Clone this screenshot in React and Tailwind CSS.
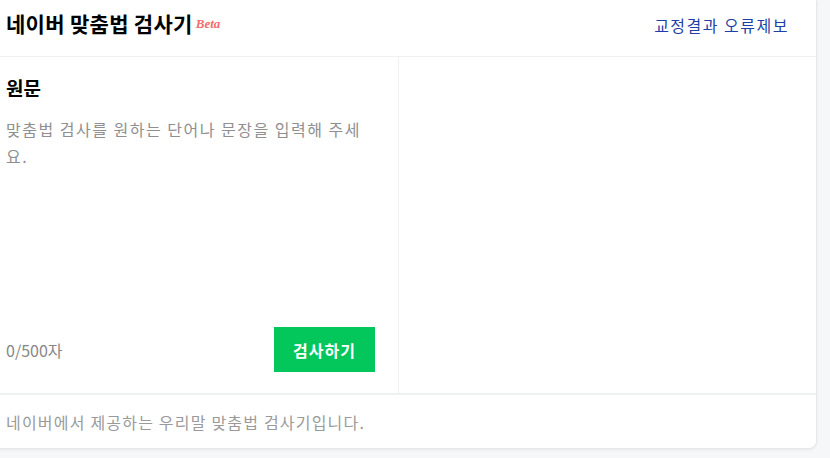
export default function App() {
  const font = { fontFamily: '"Noto Sans CJK KR", "Noto Sans", sans-serif' };
  return (
    <div className="min-h-[458px] w-[830px] overflow-hidden bg-[#f6f7f9]" style={font}>
      <div className="ml-[-19px] w-[836px] rounded-b-lg border border-t-0 border-[#e6e8eb] bg-white shadow-[0_1px_3px_rgba(0,0,0,0.06)]">
        {/* header */}
        <div className="flex h-[57px] items-center justify-between border-b border-[#eef0f3] pb-[6px] pl-[24px] pr-[27px]">
          <div className="mb-[3px] flex items-center">
            <h1 className="text-[21px] font-bold leading-none tracking-[0.3px] text-black">네이버 맞춤법 검사기</h1>
            <span
              className="ml-[3px] text-[13px] font-bold italic text-[#f26d6d]"
              style={{ fontFamily: '"Liberation Serif", serif' }}
            >
              Beta
            </span>
          </div>
          <a className="text-[16px] tracking-[1.5px] text-[#1f3fa6]">교정결과 오류제보</a>
        </div>

        {/* body */}
        <div className="grid h-[336px] grid-cols-2">
          <div className="flex flex-col border-r border-[#eef0f3] pb-[21px] pl-[24px] pr-[23px] pt-[19px]">
            <h2 className="text-[19px] font-bold leading-[24px] text-black">원문</h2>
            <p className="mt-[16px] flex-1 text-[16px] leading-[27px] tracking-[1.5px] text-[#8f8f8f]">
              맞춤법 검사를 원하는 단어나 문장을 입력해 주세요.
            </p>
            <div className="flex items-center justify-between">
              <span className="text-[16px] text-[#888]">0/500자</span>
              <button className="h-[45px] w-[101px] bg-[#03c75a] text-[16px] font-bold tracking-[1px] text-white">
                검사하기
              </button>
            </div>
          </div>
          <div />
        </div>

        {/* footer */}
        <div className="flex h-[55px] items-center border-t-2 border-[#eef0f3] pl-[24px]">
          <p className="text-[16px] tracking-[1.2px] text-[#9a9a9a]">네이버에서 제공하는 우리말 맞춤법 검사기입니다.</p>
        </div>
      </div>
    </div>
  );
}
